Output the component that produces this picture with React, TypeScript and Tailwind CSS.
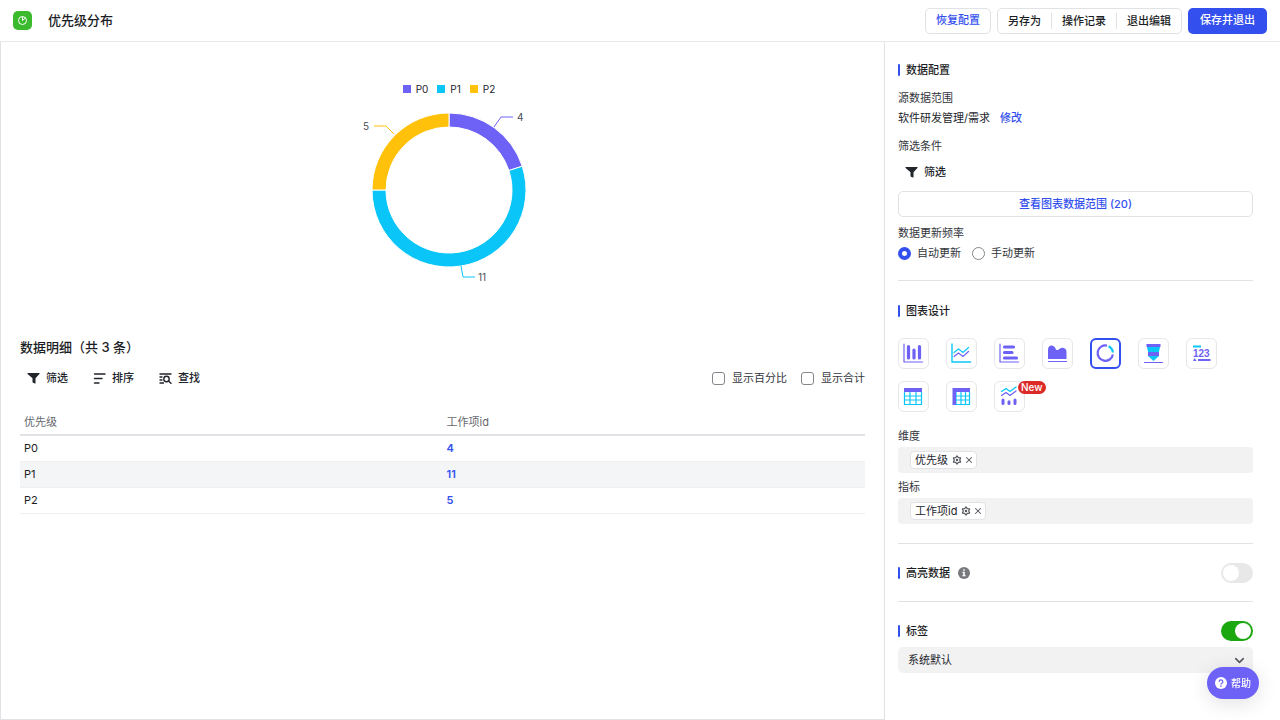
import { useState } from "react";
import type { ReactNode } from "react";
import clsx from "clsx";
import { ChevronDown, X } from "lucide-react";

const PURPLE = "#6e62f6";
const CYAN = "#0ac6f8";
const YELLOW = "#ffc10a";

const rows = [
  { name: "P0", count: 4, color: PURPLE, line: "145,37 152,27 164,27", labelX: 168, labelY: 31, anchor: "start" },
  { name: "P1", count: 11, color: CYAN, line: "112,176 114,187 126,187", labelX: 129, labelY: 191, anchor: "start" },
  { name: "P2", count: 5, color: YELLOW, line: "45,44 37,36 25,36", labelX: 20, labelY: 40, anchor: "end" },
] as const;

const total = rows.reduce((sum, row) => sum + row.count, 0);

const point = (radius: number, fraction: number) => {
  const angle = fraction * Math.PI * 2;
  return `${100 + radius * Math.sin(angle)} ${100 - radius * Math.cos(angle)}`;
};

const arc = (start: number, end: number) => {
  const large = end - start > 0.5 ? 1 : 0;
  return `M${point(77, start)} A77 77 0 ${large} 1 ${point(77, end)} L${point(63, end)} A63 63 0 ${large} 0 ${point(63, start)} Z`;
};

const FunnelIcon = () => (
  <svg width="13" height="13" viewBox="0 0 13 13" fill="currentColor" aria-hidden="true">
    <path d="M1 1h11c.6 0 .8.6.4 1L8.5 6.3v4.9c0 .3-.2.5-.5.4l-2.1-.9a.7.7 0 0 1-.4-.6V6.3L.6 2C.2 1.6.4 1 1 1Z" />
  </svg>
);

const SortIcon = () => (
  <svg width="13" height="13" viewBox="0 0 13 13" stroke="currentColor" strokeWidth="1.4" strokeLinecap="round" aria-hidden="true">
    <path d="M1.5 2h10.500M1.5 6.500h7.500M1.5 11h4.500" />
  </svg>
);

const FindIcon = () => (
  <svg width="13" height="13" viewBox="0 0 13 13" fill="none" stroke="currentColor" strokeWidth="1.4" aria-hidden="true">
    <path d="M.5 2h12M.5 5h3M.5 8h3M.5 11h4.500" />
    <circle cx="7.5" cy="7" r="2.7" />
    <path d="m9.500 9 3 2.700" />
  </svg>
);

const GearIcon = () => (
  <svg width="10" height="10" viewBox="0 0 10 10" fill="none" stroke="currentColor" strokeWidth="1.2" strokeLinejoin="round" aria-hidden="true">
    <path d="M5 .9 6.300 2.600 8.600 2.900 7.700 5 8.600 7.100 6.300 7.400 5 9.100 3.700 7.400 1.400 7.100 2.300 5 1.400 2.900 3.700 2.600Z" />
    <circle cx="5" cy="5" r=".6" />
  </svg>
);

const DonutChart = () => {
  let offset = 0;
  return (
    <svg width="200" height="200" viewBox="0 0 200 200" role="img" aria-label="优先级分布">
      {rows.map((row) => {
        const start = offset;
        offset += row.count / total;
        return (
          <g key={row.name}>
            <path d={arc(start, offset)} fill={row.color} stroke="#fff" strokeWidth="1" />
            <polyline points={row.line} fill="none" stroke={row.color} strokeWidth="1" />
            <text x={row.labelX} y={row.labelY} textAnchor={row.anchor} fontSize="10" fill="#4b4d55">
              {row.count}
            </text>
          </g>
        );
      })}
    </svg>
  );
};

const chartTypes: { label: string; isNew?: boolean; icon: ReactNode }[] = [
  {
    label: "柱状图",
    icon: (
      <g fill="none" stroke={PURPLE} strokeLinecap="round">
        <path d="M1 1v18h18.500" strokeWidth="1.2" />
        <path d="M5.500 3.500v11.500M11 7v8M16.500 3.500v11.500" strokeWidth="3.2" />
      </g>
    ),
  },
  {
    label: "折线图",
    icon: (
      <g fill="none" strokeWidth="1.2" strokeLinecap="round">
        <path d="M1 1v18h18.500" stroke={CYAN} strokeWidth="1.4" />
        <path d="M3 9.500 7.500 6 12 9.500 17.500 4.500" stroke={CYAN} />
        <path d="M3 13.500 7.500 10 12 13.500 17.500 8.500" stroke={PURPLE} />
      </g>
    ),
  },
  {
    label: "条形图",
    icon: (
      <g fill="none" stroke={PURPLE} strokeLinecap="round">
        <path d="M1 1v18h18.500" strokeWidth="1.2" />
        <path d="M5.500 4h9M5.500 9.500h7.500M5.500 15h12" strokeWidth="3.2" />
      </g>
    ),
  },
  {
    label: "面积图",
    icon: (
      <g fill={PURPLE}>
        <path d="M1 16V6.500C1 1.500 7 1.500 8.500 5.500 9.500 8 11.500 7 13 5.500 15 4 19.500 5 19.500 8.500V16Z" />
        <rect x="1" y="18" width="19" height="1" />
      </g>
    ),
  },
  {
    label: "环形图",
    icon: (
      <g fill="none" strokeWidth="2.2">
        <path d="M12 2.600A7.700 7.700 0 1 0 17.900 11.500" stroke={PURPLE} />
        <path d="M13.500 3.200A7.700 7.700 0 0 1 17.900 9.500" stroke={CYAN} />
      </g>
    ),
  },
  {
    label: "漏斗图",
    icon: (
      <g>
        <path d="M3.500 1h14v3h-14Z" fill={PURPLE} />
        <path d="M4 4h13l-1 5H5Z" fill={CYAN} />
        <path d="M5 9h11v4H5Z" fill={PURPLE} />
        <path d="M5 13h11l-5.500 5Z" fill={CYAN} />
        <path d="M1 19.500h19" stroke={PURPLE} />
      </g>
    ),
  },
  {
    label: "数字图",
    icon: (
      <g>
        <path d="M2 3.500h8" stroke={CYAN} strokeWidth="2" />
        <text x="2" y="14" fontSize="10" fontWeight="700" fill={PURPLE} className="font-['Liberation_Sans',sans-serif]">
          123
        </text>
        <path d="m2 18 1.700-3 1.800 3Z" fill={PURPLE} />
        <path d="M7 17h12.500" stroke={PURPLE} strokeWidth="2" />
      </g>
    ),
  },
  {
    label: "表格",
    icon: (
      <g>
        <path d="M1.500 6v12.500h17V6M1.500 10h17M1.500 14h17M7 6v12M13 6v12" fill="none" stroke={CYAN} strokeWidth="1.2" />
        <path d="M1 2h18v4H1Z" fill={PURPLE} />
      </g>
    ),
  },
  {
    label: "透视表",
    icon: (
      <g>
        <path d="M5 6v12.500h13.500V6M5 10h13.500M5 14h13.500M10 6v12M14.500 6v12" fill="none" stroke={CYAN} strokeWidth="1.2" />
        <path d="M1.500 2H19v4H5v13H1.500Z" fill={PURPLE} />
      </g>
    ),
  },
  {
    label: "组合图",
    isNew: true,
    icon: (
      <g fill="none" strokeLinecap="round">
        <path d="M2.500 5.500 7 2.500 11 5.500 17 1" stroke={CYAN} strokeWidth="1.3" />
        <path d="M2.500 9.500 7 6.500 11 9.500 17 5" stroke={PURPLE} strokeWidth="1.3" />
        <path d="M4 14v3.500M10 15.800v1.700M16 14v3.500" stroke={PURPLE} strokeWidth="3" />
      </g>
    ),
  },
];

const SectionTitle = ({ children }: { children: ReactNode }) => (
  <h2 className="flex h-5 items-center gap-1.5 font-medium text-[#1b1d24]">
    <span className="h-3 w-0.5 rounded-sm bg-[#3350ee]" />
    {children}
  </h2>
);

const Toggle = ({ label, defaultChecked }: { label: string; defaultChecked?: boolean }) => (
  <input
    type="checkbox"
    role="switch"
    aria-label={label}
    defaultChecked={defaultChecked}
    className="h-5 w-8 cursor-pointer appearance-none rounded-full bg-[#e8e8e9] p-0.5 before:block before:size-4 before:rounded-full before:bg-white checked:bg-[#1aa70f] checked:before:translate-x-3"
  />
);

const FieldTag = ({ children }: { children: ReactNode }) => (
  <div className="mt-px flex h-[26px] items-center rounded bg-[#f2f2f3] px-3">
    <span className="flex h-[18px] items-center gap-0.5 rounded-sm border border-[#e1e2e5] bg-white pr-0.5 pl-1 text-[#23252c]">
      {children}
      <button type="button" aria-label="设置" className="ml-0.5 text-[#55575e]">
        <GearIcon />
      </button>
      <button type="button" aria-label="移除" className="text-[#55575e]">
        <X size={10} strokeWidth={2.5} />
      </button>
    </span>
  </div>
);

const Header = () => (
  <header className="flex h-[42px] shrink-0 items-center border-b border-[#e8e9eb] px-[13px]">
    <span className="flex size-[19px] items-center justify-center rounded-[5px] bg-[#3cba2e] text-white">
      <svg width="11" height="11" viewBox="0 0 11 11" fill="none" stroke="currentColor" aria-hidden="true">
        <circle cx="5.5" cy="5.5" r="4" />
        <path d="M5.500 1.500v4L8 3.200" />
      </svg>
    </span>
    <h1 className="ml-4 text-[13px] font-medium">优先级分布</h1>
    <div className="ml-auto flex gap-1.5 font-medium">
      <button type="button" className="h-[26px] rounded-[5px] border border-[#e1e2e5] px-2.5 text-[#3350ee]">
        恢复配置
      </button>
      <div className="flex h-[26px] items-center divide-x divide-[#e1e2e5] rounded-[5px] border border-[#e1e2e5]">
        <button type="button" className="h-4 px-2.5">另存为</button>
        <button type="button" className="h-4 px-2.5">操作记录</button>
        <button type="button" className="h-4 px-2.5">退出编辑</button>
      </div>
      <button type="button" className="h-[26px] rounded-[5px] bg-[#3350ee] px-3 text-white">
        保存并退出
      </button>
    </div>
  </header>
);

const toolClass = "flex h-6 items-center gap-1.5 px-[7px] font-medium text-[#23252c]";
const checkClass =
  "size-[13px] appearance-none rounded-[3px] border border-[#85878c] bg-white checked:border-[#3350ee] checked:bg-[#3350ee]";

const Preview = () => (
  <main className="min-w-0 flex-1 border-x border-b border-[#e1e2e5] px-[19px] pt-[38px]">
    <div className="flex flex-col items-center pl-[13px]">
      <ul className="flex h-[18px] items-center gap-[9px] text-[10px] text-[#23252c]">
        {rows.map((row) => (
          <li key={row.name} className="flex items-center gap-[5px]">
            <svg width="8" height="8" aria-hidden="true">
              <rect width="8" height="8" fill={row.color} />
            </svg>
            {row.name}
          </li>
        ))}
      </ul>
      <div className="-mt-2">
        <DonutChart />
      </div>
    </div>

    <h2 className="mt-[47px] text-[13px] leading-5 font-medium">数据明细（共 3 条）</h2>
    <div className="mt-[9px] flex items-center gap-[11px]">
      <button type="button" className={toolClass}>
        <FunnelIcon />
        筛选
      </button>
      <button type="button" className={toolClass}>
        <SortIcon />
        排序
      </button>
      <button type="button" className={toolClass}>
        <FindIcon />
        查找
      </button>
      <div className="ml-auto flex gap-3.5 text-[#34363d]">
        <label className="flex items-center gap-[7px]">
          <input type="checkbox" className={checkClass} />
          显示百分比
        </label>
        <label className="flex items-center gap-[7px]">
          <input type="checkbox" className={checkClass} />
          显示合计
        </label>
      </div>
    </div>

    <table className="mt-[18px] w-full table-fixed border-separate border-spacing-0 text-left">
      <thead>
        <tr className="h-7 text-[#66686e]">
          <th className="border-b-2 border-[#e1e2e5] px-1 pt-0.5 font-normal">优先级</th>
          <th className="border-b-2 border-[#e1e2e5] px-1 pt-0.5 font-normal">工作项id</th>
        </tr>
      </thead>
      <tbody>
        {rows.map((row) => (
          <tr key={row.name} className="h-[26px] even:bg-[#f4f5f7]">
            <td className="border-b border-[#eeeff1] px-1">{row.name}</td>
            <td className="border-b border-[#eeeff1] px-1">
              <a href="#detail" className="font-semibold text-[#3350ee]">
                {row.count}
              </a>
            </td>
          </tr>
        ))}
      </tbody>
    </table>
  </main>
);

const radioClass =
  "size-[13px] appearance-none rounded-full border border-[#85878c] bg-white checked:border-4 checked:border-[#3350ee]";

const Settings = () => {
  const [selected, setSelected] = useState("环形图");

  return (
    <aside className="w-[395px] shrink-0 pt-[18px] pr-[27px] pl-[13px] leading-5 text-[#34363d]">
      <SectionTitle>数据配置</SectionTitle>
      <p className="mt-2">源数据范围</p>
      <p className="text-[#23252c]">
        软件研发管理/需求
        <a href="#source" className="ml-2.5 font-medium text-[#3350ee]">
          修改
        </a>
      </p>
      <p className="mt-2">筛选条件</p>
      <button type="button" className="mt-1 flex h-6 items-center gap-1.5 px-[7px] font-medium text-[#23252c]">
        <FunnelIcon />
        筛选
      </button>
      <button
        type="button"
        className="mt-[7px] flex h-[26px] w-full items-center justify-center rounded-[5px] border border-[#e1e2e5] font-medium text-[#3350ee]"
      >
        查看图表数据范围 (20)
      </button>
      <fieldset className="mt-1.5">
        <legend>数据更新频率</legend>
        <div className="flex h-5 gap-[11px]">
          <label className="flex items-center gap-1.5">
            <input type="radio" name="refresh" defaultChecked className={radioClass} />
            自动更新
          </label>
          <label className="flex items-center gap-1.5">
            <input type="radio" name="refresh" className={radioClass} />
            手动更新
          </label>
        </div>
      </fieldset>

      <hr className="mt-[17px] mb-5 border-[#e1e2e5]" />

      <SectionTitle>图表设计</SectionTitle>
      <div className="mt-[17px] flex flex-wrap gap-x-[17px] gap-y-3">
        {chartTypes.map((type) => (
          <button
            key={type.label}
            type="button"
            aria-label={type.label}
            aria-pressed={selected === type.label}
            onClick={() => setSelected(type.label)}
            className={clsx(
              "relative flex size-[31px] items-center justify-center rounded-md",
              selected === type.label ? "border-2 border-[#3350ee]" : "border border-[#e6e7e9]",
            )}
          >
            <svg width="21" height="21" viewBox="0 0 21 21" className="shrink-0" aria-hidden="true">
              {type.icon}
            </svg>
            {type.isNew && (
              <span className="absolute -top-px left-[23px] rounded-full bg-[#dc2b26] px-[3px] text-[10px] leading-[13px] font-medium text-white">
                New
              </span>
            )}
          </button>
        ))}
      </div>

      <p className="mt-3.5">维度</p>
      <FieldTag>优先级</FieldTag>
      <p className="mt-1">指标</p>
      <FieldTag>工作项id</FieldTag>

      <hr className="my-[19px] border-[#e1e2e5]" />

      <div className="flex items-center">
        <SectionTitle>高亮数据</SectionTitle>
        <svg width="12" height="12" viewBox="0 0 12 12" className="ml-2" aria-hidden="true">
          <circle cx="6" cy="6" r="6" fill="#77797d" />
          <path d="M5.200 2.300h1.600v1.500H5.200ZM4.500 4.800h2.300v3.400h.9v1.100H4.300V8.200h.9V5.900h-.7Z" fill="#fff" />
        </svg>
        <span className="ml-auto flex">
          <Toggle label="高亮数据" />
        </span>
      </div>

      <hr className="mt-[18px] mb-[19px] border-[#e1e2e5]" />

      <div className="flex items-center justify-between">
        <SectionTitle>标签</SectionTitle>
        <Toggle label="标签" defaultChecked />
      </div>
      <div className="relative mt-1.5">
        <select
          aria-label="标签样式"
          className="block h-[26px] w-full appearance-none rounded-[5px] bg-[#f2f2f3] px-2.5 text-[#23252c]"
        >
          <option>系统默认</option>
        </select>
        <ChevronDown size={15} strokeWidth={2.5} className="pointer-events-none absolute top-1.5 right-1.5 text-[#55575e]" />
      </div>
    </aside>
  );
};

const App = () => (
  <div className="flex min-h-screen flex-col bg-white font-[Inter,'Noto_Sans_CJK_SC',sans-serif] text-[11px] text-[#1b1d24]">
    <Header />
    <div className="flex flex-1">
      <Preview />
      <Settings />
    </div>
    <button
      type="button"
      className="fixed right-[21px] bottom-[21px] flex h-8 items-center gap-1 rounded-full bg-[#6e62f6] px-2 text-[10px] font-medium text-white shadow-[0_4px_20px_rgba(0,0,0,0.12)]"
    >
      <svg width="12" height="12" viewBox="0 0 12 12" aria-hidden="true">
        <circle cx="6" cy="6" r="6" fill="#fff" />
        <path d="M4.200 4.700a1.800 1.800 0 1 1 2.700 1.500c-.6.400-.9.600-.9 1.200" fill="none" stroke={PURPLE} strokeWidth="1.3" />
        <circle cx="6" cy="9.1" r=".8" fill={PURPLE} />
      </svg>
      帮助
    </button>
  </div>
);

export default App;
